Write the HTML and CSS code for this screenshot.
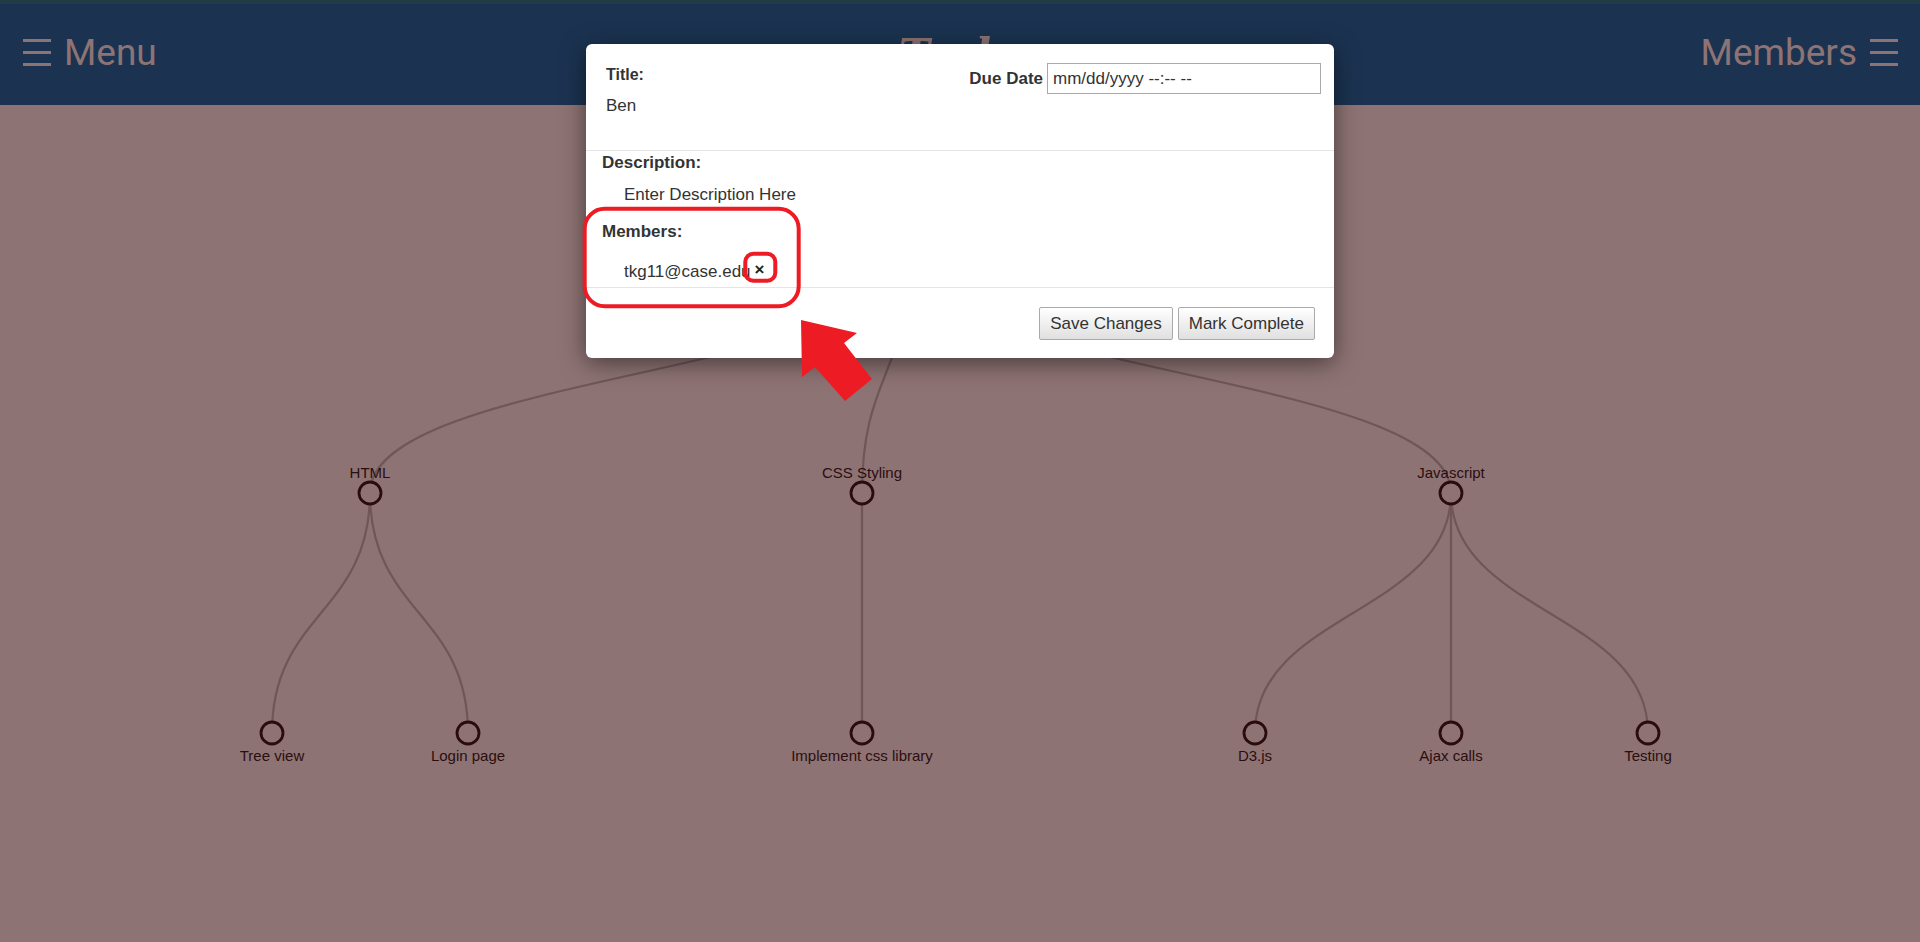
FILE: index.html
```html
<!DOCTYPE html>
<html lang="en">
<head>
<meta charset="utf-8">
<title>Tasks</title>
<link rel="stylesheet" href="styles.css">
</head>
<body>
  <header class="topbar">
    <div class="nav-btn nav-left">
      <svg class="burger" width="28" height="27" viewBox="0 0 28 27"><rect x="0" y="0" width="28" height="3"/><rect x="0" y="12" width="28" height="3"/><rect x="0" y="24" width="28" height="3"/></svg>
      <span>Menu</span>
    </div>
    <h1 class="brand">Tasks</h1>
    <div class="nav-btn nav-right">
      <span>Members</span>
      <svg class="burger" width="28" height="27" viewBox="0 0 28 27"><rect x="0" y="0" width="28" height="3"/><rect x="0" y="12" width="28" height="3"/><rect x="0" y="24" width="28" height="3"/></svg>
    </div>
  </header>

  <main class="tree-area">
    <svg class="tree" width="1920" height="837" viewBox="0 105 1920 837">
      <g class="links">
        <path d="M910,253 C910,373 370,373 370,493"/>
        <path d="M910,253 C910,373 862,373 862,493"/>
        <path d="M910,253 C910,373 1451,373 1451,493"/>
        <path d="M370,493 C370,613 272,613 272,733"/>
        <path d="M370,493 C370,613 468,613 468,733"/>
        <path d="M862,493 C862,613 862,613 862,733"/>
        <path d="M1451,493 C1451,613 1255,613 1255,733"/>
        <path d="M1451,493 C1451,613 1451,613 1451,733"/>
        <path d="M1451,493 C1451,613 1648,613 1648,733"/>
      </g>
      <g class="nodes">
        <circle cx="910" cy="253" r="11"/>
        <circle cx="370" cy="493" r="11"/>
        <circle cx="862" cy="493" r="11"/>
        <circle cx="1451" cy="493" r="11"/>
        <circle cx="272" cy="733" r="11"/>
        <circle cx="468" cy="733" r="11"/>
        <circle cx="862" cy="733" r="11"/>
        <circle cx="1255" cy="733" r="11"/>
        <circle cx="1451" cy="733" r="11"/>
        <circle cx="1648" cy="733" r="11"/>
      </g>
      <g class="labels">
        <text x="370" y="478">HTML</text>
        <text x="862" y="478">CSS Styling</text>
        <text x="1451" y="478">Javascript</text>
        <text x="272" y="761">Tree view</text>
        <text x="468" y="761">Login page</text>
        <text x="862" y="761">Implement css library</text>
        <text x="1255" y="761">D3.js</text>
        <text x="1451" y="761">Ajax calls</text>
        <text x="1648" y="761">Testing</text>
      </g>
    </svg>
  </main>

  <div class="modal">
    <div class="modal-header">
      <div class="title-col">
        <div class="title-label">Title:</div>
        <div class="title-value">Ben</div>
      </div>
      <div class="due">
        <span class="due-label">Due Date</span>
        <div class="date-input">mm/dd/yyyy --:-- --</div>
      </div>
    </div>
    <div class="modal-body">
      <div class="field-label">Description:</div>
      <div class="desc-text">Enter Description Here</div>
      <div class="field-label members-label">Members:</div>
      <div class="member">tkg11@case.edu<span class="remove">×</span></div>
    </div>
    <div class="modal-footer">
      <button class="btn">Save Changes</button>
      <button class="btn">Mark Complete</button>
    </div>
  </div>

  <svg class="annotations" width="1920" height="942" viewBox="0 0 1920 942">
    <rect x="584.7" y="208.7" width="214" height="97.6" rx="20" ry="20"/>
    <rect x="745.3" y="253.7" width="30" height="27" rx="8" ry="8"/>
    <polygon points="801,320 857,333 844,343 872,379 845,401 815,367 802,377"/>
  </svg>
</body>
</html>
```

FILE: styles.css
```css
html, body {
  margin: 0;
  padding: 0;
}

body {
  width: 1920px;
  height: 942px;
  overflow: hidden;
  background: #8e7374;
  font-family: "Liberation Sans", Arial, sans-serif;
  position: relative;
}

.topbar {
  box-sizing: border-box;
  height: 105px;
  border-top: 4px solid #1f3c47;
  padding: 0 22px 4px 23px;
  background: #1b3351;
  display: grid;
  grid-template-columns: 1fr auto 1fr;
  align-items: center;
}

.nav-btn {
  display: flex;
  align-items: center;
  gap: 13px;
  font-family: Roboto, "Liberation Sans", sans-serif;
  font-size: 37px;
  line-height: 44px;
  color: #8e7374;
}

.nav-right {
  justify-self: end;
}

.burger {
  fill: #8e7374;
  display: block;
}

.brand {
  margin: 0;
  padding-top: 8px;
  font-family: "Liberation Serif", serif;
  font-style: italic;
  font-weight: bold;
  font-size: 56px;
  line-height: 56px;
  color: #8e7374;
}

.tree-area {
  height: 837px;
}

.tree {
  display: block;
}

.links path {
  fill: none;
  stroke: #6f5758;
  stroke-width: 2.2;
}

.nodes circle {
  fill: #8e7374;
  stroke: #2a0c0e;
  stroke-width: 2.8;
}

.labels text {
  font-family: "Liberation Sans", Arial, sans-serif;
  font-size: 15px;
  fill: #2b0e0f;
  text-anchor: middle;
}

.modal {
  position: absolute;
  left: 586px;
  top: 44px;
  width: 748px;
  background: #fff;
  border-radius: 6px;
  box-shadow: 0 5px 25px rgba(0, 0, 0, 0.5);
  color: #333;
  z-index: 10;
}

.modal-header {
  box-sizing: border-box;
  height: 107px;
  padding: 21px 13px 0 20px;
  border-bottom: 1px solid #e5e5e5;
  display: flex;
  justify-content: space-between;
  align-items: flex-start;
}

.title-label {
  font-size: 16px;
  font-weight: bold;
  line-height: 20px;
}

.title-value {
  margin-top: 11px;
  font-size: 17px;
  line-height: 20px;
}

.due {
  display: flex;
  align-items: center;
  gap: 4px;
  margin-top: -2px;
}

.due-label {
  font-size: 17px;
  font-weight: bold;
}

.date-input {
  box-sizing: border-box;
  width: 274px;
  height: 31px;
  border: 1px solid #a9a9a9;
  padding: 0 5px;
  font-size: 17px;
  line-height: 29px;
  color: #333;
}

.modal-body {
  padding: 2px 16px 5px;
  border-bottom: 1px solid #e5e5e5;
}

.field-label {
  font-size: 17px;
  font-weight: bold;
  line-height: 20px;
}

.desc-text {
  margin: 12px 0 0 22px;
  font-size: 17px;
  line-height: 20px;
}

.members-label {
  margin-top: 17px;
}

.member {
  margin: 18px 0 0 22px;
  font-size: 17px;
  line-height: 20px;
}

.remove {
  margin-left: 4px;
  font-weight: bold;
  font-size: 17px;
  color: #222;
  vertical-align: 2px;
}

.modal-footer {
  padding: 19px 19px 18px;
  display: flex;
  justify-content: flex-end;
  gap: 5px;
}

.btn {
  box-sizing: border-box;
  height: 33px;
  padding: 0 10px;
  font-family: "Liberation Sans", Arial, sans-serif;
  font-size: 17px;
  color: #333;
  background: linear-gradient(#ffffff, #e0e0e0);
  border: 1px solid #aaaaaa;
  border-radius: 2px;
}

.annotations {
  position: absolute;
  left: 0;
  top: 0;
  z-index: 20;
  pointer-events: none;
}

.annotations rect {
  fill: none;
  stroke: #ed1c24;
  stroke-width: 4;
}

.annotations polygon {
  fill: #ed1c24;
}
```
